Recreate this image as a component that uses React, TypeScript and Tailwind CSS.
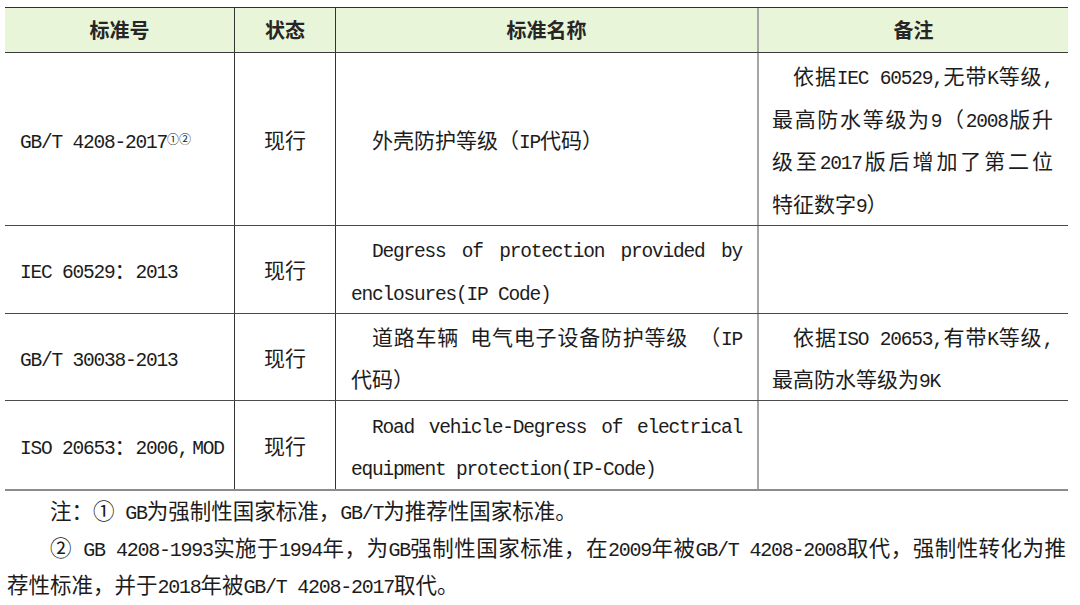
import React from 'react';

// Latin runs get a narrow mono face so widths match the half-width glyphs in the picture
const latinCell = 'font-["Liberation_Mono",monospace] text-[19.5px] leading-none tracking-[-1.2px]';
const latinNote = 'font-["Liberation_Mono",monospace] text-[20px] leading-none tracking-[-1.25px]';

function Mixed({ text, note }: { text: string; note?: boolean }) {
  const parts = text.split(/([\x20-\x7E]+)/);
  return (
    <>
      {parts.map((p, i) => {
        if (p === '') return null;
        if (/^[\x20-\x7E]+$/.test(p)) {
          return (
            <span key={i} className={note ? latinNote : latinCell}>
              {p}
            </span>
          );
        }
        return <span key={i}>{p}</span>;
      })}
    </>
  );
}

// one visual line; justified ones stretch to the cell edge
function Line({ text, justify, indent, note }: { text: string; justify?: boolean; indent?: boolean; note?: boolean }) {
  return (
    <div
      className={
        'whitespace-nowrap ' +
        (justify ? '[text-align-last:justify] text-justify ' : '') +
        (indent ? (note ? 'pl-[43px] ' : 'pl-[21px] ') : '')
      }
    >
      <Mixed text={text} note={note} />
    </div>
  );
}

interface Row {
  code: React.ReactNode;
  name: { text: string; justify?: boolean; indent?: boolean }[];
  note: { text: string; justify?: boolean; indent?: boolean }[];
  height: string;
}

const rows: Row[] = [
  {
    code: (
      <>
        <Mixed text="GB/T 4208-2017" />
        <sup className="text-[12px] leading-none relative -top-[4px]">①②</sup>
      </>
    ),
    name: [{ text: '外壳防护等级（IP代码）', indent: true }],
    note: [
      { text: '依据IEC 60529,无带K等级,', indent: true, justify: true },
      { text: '最高防水等级为9（2008版升', justify: true },
      { text: '级至2017版后增加了第二位', justify: true },
      { text: '特征数字9）' },
    ],
    height: 'h-[173px]',
  },
  {
    code: <Mixed text="IEC 60529：2013" />,
    name: [
      { text: 'Degress of protection provided by', indent: true, justify: true },
      { text: 'enclosures(IP Code)' },
    ],
    note: [],
    height: 'h-[88px]',
  },
  {
    code: <Mixed text="GB/T 30038-2013" />,
    name: [
      { text: '道路车辆 电气电子设备防护等级 （IP', indent: true, justify: true },
      { text: '代码）' },
    ],
    note: [
      { text: '依据ISO 20653,有带K等级,', indent: true, justify: true },
      { text: '最高防水等级为9K' },
    ],
    height: 'h-[87px]',
  },
  {
    code: <Mixed text={'ISO 20653：2006,\u2009MOD'} />,
    name: [
      { text: 'Road vehicle-Degress of electrical', indent: true, justify: true },
      { text: 'equipment protection(IP-Code)' },
    ],
    note: [],
    height: 'h-[88px]',
  },
];

export default function App() {
  return (
    <div
      lang="zh-CN"
      className='w-[1080px] h-[605px] bg-white pt-[7px] px-[5px] text-[#1c1c1c] font-["Noto_Sans_CJK_SC",sans-serif] overflow-hidden'
    >
      <div className="w-[1063px] border-t-[1.5px] border-t-[#2f2f2f] border-b-2 border-b-[#8c8c8c]">
        {/* header */}
        <div className="grid grid-cols-[230px_101px_423px_1fr] h-[45px] bg-[#e9f5d9] border-b border-b-[#3a3a3a] text-[20px] font-bold text-[#262626]">
          <div className="flex items-center justify-center border-r border-r-[#333]">标准号</div>
          <div className="flex items-center justify-center border-r border-r-[#333]">状态</div>
          <div className="flex items-center justify-center border-r-2 border-r-[#a6a6a6]">标准名称</div>
          <div className="flex items-center justify-center">备注</div>
        </div>

        {rows.map((r, i) => (
          <div
            key={i}
            className={
              'grid grid-cols-[230px_101px_423px_1fr] text-[21px] leading-[42.5px] ' +
              r.height +
              (i < rows.length - 1 ? ' border-b border-b-[#4a4a4a]' : '')
            }
          >
            <div className="flex items-center pl-[15px] border-r border-r-[#333]">
              <div className="whitespace-nowrap">{r.code}</div>
            </div>
            <div className="flex items-center justify-center border-r border-r-[#333]">现行</div>
            <div className="flex flex-col justify-center px-[15px] border-r-2 border-r-[#a6a6a6]">
              {r.name.map((l, j) => (
                <Line key={j} {...l} />
              ))}
            </div>
            <div className="flex flex-col justify-center pl-[13px] pr-[15px]">
              {r.note.map((l, j) => (
                <Line key={j} {...l} />
              ))}
            </div>
          </div>
        ))}
      </div>

      {/* footnotes */}
      <div className="w-[1061px] pl-[2px] text-[21.5px] leading-[37px]">
        <Line text="注：① GB为强制性国家标准，GB/T为推荐性国家标准。" indent note />
        <Line
          text="② GB 4208-1993实施于1994年，为GB强制性国家标准，在2009年被GB/T 4208-2008取代，强制性转化为推"
          indent
          justify
          note
        />
        <Line text="荐性标准，并于2018年被GB/T 4208-2017取代。" note />
      </div>
    </div>
  );
}
